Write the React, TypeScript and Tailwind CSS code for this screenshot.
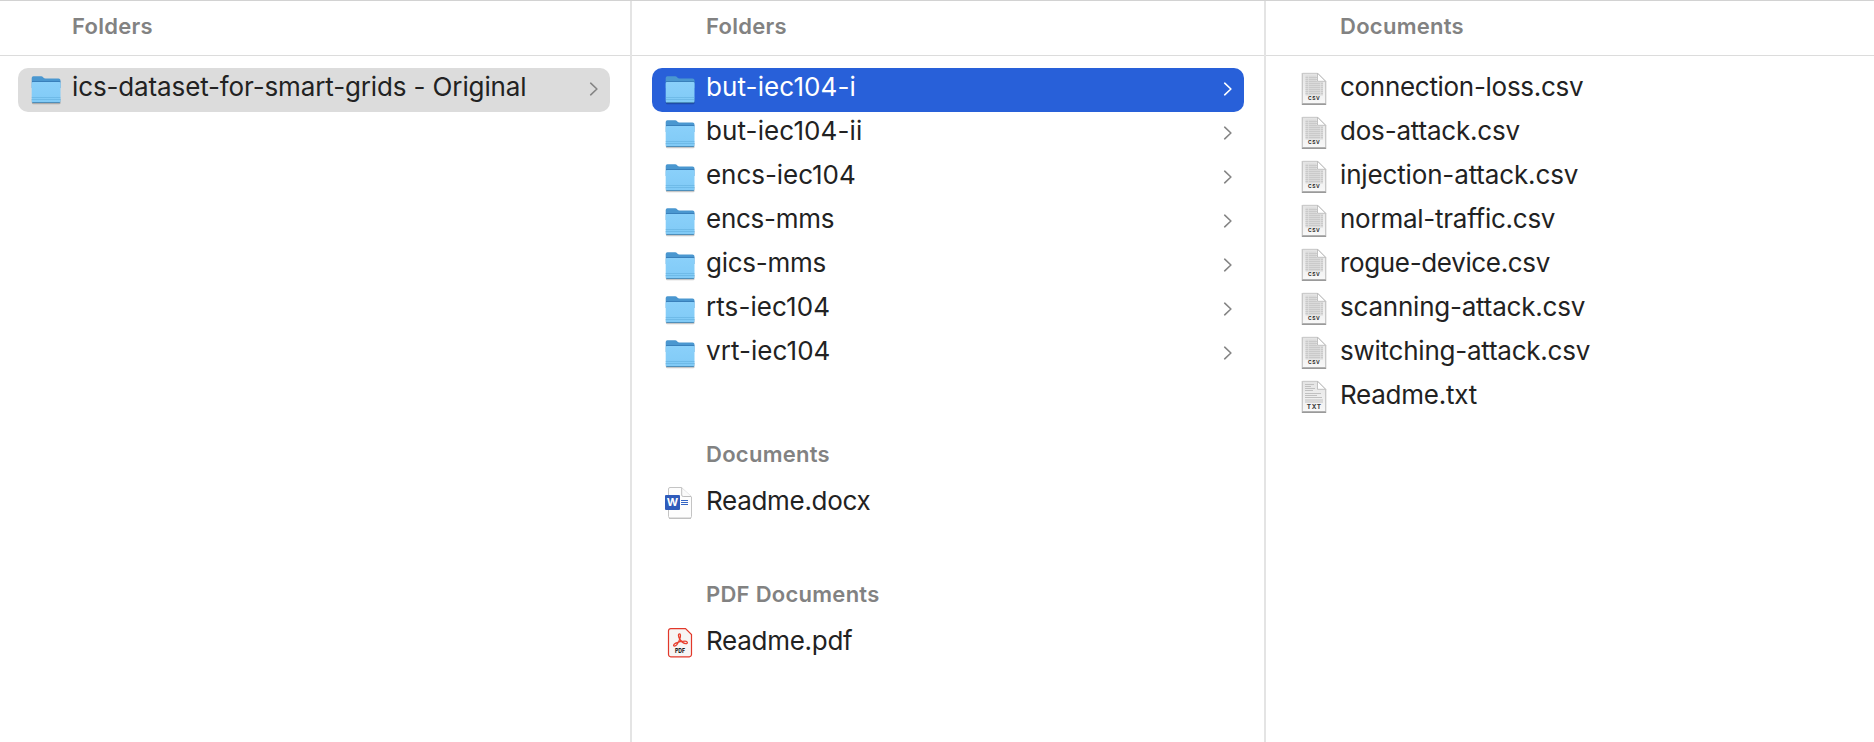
import React from "react";

function FolderIcon() {
  return (
    <svg width="32" height="44" viewBox="0 0 32 44" className="shrink-0">
      <defs>
        <linearGradient id="folder-front" x1="0" y1="0" x2="0" y2="1"><stop offset="0" stopColor="#8ad0fa" /><stop offset="1" stopColor="#80caf6" /></linearGradient>
      </defs>
      <rect x="1.800" y="30" width="28.800" height="6.200" rx="1.500" fill="#000" opacity=".22" />
      <path d="M1.700 9.900A1.700 1.700 0 0 1 3.400 8.200h7.700c1.800 0 2.600 2.300 4.400 2.300h13a2 2 0 0 1 2 2V20H1.700z" fill="#4a97d0" />
      <path d="M2 13.700h28.300" stroke="#3378b4" strokeWidth=".9" />
      <path d="M1.700 15.500a1.400 1.400 0 0 1 1.400-1.400h26a1.400 1.400 0 0 1 1.400 1.400v17.700a1.600 1.600 0 0 1-1.600 1.600H3.300a1.600 1.600 0 0 1-1.600-1.600z" fill="url(#folder-front)" />
      <path d="M1.700 29.500h28.800M1.700 31.500h28.800" stroke="#5ba8d8" strokeWidth=".8" opacity=".6" />
      <path d="M2.300 34.500h27.600" stroke="#4788b4" strokeWidth=".9" />
    </svg>
  );
}

function Page({ children }: { children: React.ReactNode }) {
  return (
    <svg width="32" height="44" viewBox="0 0 32 44" className="shrink-0">
      <defs>
        <linearGradient id="page-fill" x1="0" y1="0" x2="0" y2="1"><stop offset="0" stopColor="#e4e4e4" /><stop offset="1" stopColor="#f8f8f8" /></linearGradient>
      </defs>
      <path d="M3.500 5h16.500l8.500 8.500v23.400h-25z" fill="#cccccc" opacity=".75" />
      <path d="M4.500 5.300h15l8 8v22.200h-23z" fill="url(#page-fill)" stroke="#c0c0c0" strokeWidth=".8" />
      <path d="M4 36.200h24" stroke="#858585" strokeWidth="1.100" />
      {children}
      <path d="M19.500 5.300v8h8z" fill="#fff" stroke="#b5b5b5" strokeWidth=".8" />
    </svg>
  );
}

function CsvIcon() {
  return (
    <Page>
      <path d="M7.500 7.500h11v6.500h6.500v13.500h-17.500z" fill="#dadada" />
      <path d="M7.500 9.500h11.500M7.500 11.500h11.500M7.500 13.500h11.500M7.500 15.500h17.500M7.500 17.500h17.500M7.500 19.500h17.500M7.500 21.500h17.500M7.500 23.500h17.500M7.500 25.500h17.500" stroke="#c8c8c8" strokeWidth=".9" />
      <path d="M10.500 8v19.500M22.500 14.500v13" stroke="#e2e2e2" strokeWidth=".7" />
      <text x="16.200" y="32.300" textAnchor="middle" fontSize="5" fontWeight="700" letterSpacing=".5" fill="#2c2c2c" fontFamily="Inter, sans-serif">CSV</text>
    </Page>
  );
}

function TxtIcon() {
  return (
    <Page>
      <path d="M7 8.500h9M7 10.500h6M7 12.500h10M7 14.500h8M7 17.500h16M7 19.500h12M7 21.500h17M7 24h18M7 26h18" stroke="#c0c0c0" strokeWidth="1" />
      <text x="16.200" y="32.600" textAnchor="middle" fontSize="6.400" fontWeight="700" letterSpacing=".6" fill="#3c3c3c" fontFamily="Inter, sans-serif">TXT</text>
    </Page>
  );
}

function WordIcon() {
  return (
    <svg width="32" height="44" viewBox="0 0 32 44" className="shrink-0">
      <path d="M6 5.500h11.500l10 9.500v19.500a1.500 1.500 0 0 1-1.500 1.500H6a1.500 1.500 0 0 1-1.500-1.500V7A1.500 1.500 0 0 1 6 5.500z" fill="#fdfdfd" stroke="#c4c4c4" strokeWidth="1" />
      <path d="M17.700 5.700v7.300a1.500 1.500 0 0 0 1.500 1.500h8" fill="#fafafa" stroke="#bdbdbd" strokeWidth="1" />
      <path d="M5 36.500h22" stroke="#b8b8b8" strokeWidth=".8" />
      <path d="M17 18.500h7M17 20.500h7M17 22.500h7" stroke="#3565c4" strokeWidth="1" />
      <rect x="1" y="13" width="15" height="15" rx="1" fill="#2f5cbb" />
      <text x="8.500" y="24.400" textAnchor="middle" fontSize="11" fontWeight="700" fill="#fff" fontFamily="Inter, sans-serif">W</text>
    </svg>
  );
}

function PdfIcon() {
  return (
    <svg width="32" height="44" viewBox="0 0 32 44" className="shrink-0">
      <path d="M6.700 6.600h14.800l6 6v20a2.200 2.200 0 0 1-2.200 2.200H6.700a2.200 2.200 0 0 1-2.200-2.200V8.800a2.200 2.200 0 0 1 2.200-2.200z" fill="#f7f5f4" stroke="#e2382a" strokeWidth="1.200" />
      <path d="M15.600 11.800c-1.800 0-1.200 3.200.2 5.400 1.300 2.200 3.900 4.400 6 4.400 2.400 0 2-2.500-.8-2.500-3 0-7 .8-9.300 2-2.600 1.500-2.500 3-1.300 3 1.900 0 4.300-4 5.400-7.200.8-2.500 1-5.100-.2-5.100z" fill="none" stroke="#e8402f" strokeWidth="1.300" />
      <text x="16" y="31.400" textAnchor="middle" textLength="10" lengthAdjust="spacingAndGlyphs" fontSize="6.400" fontWeight="800" fill="#1c1c1c" fontFamily="Inter, sans-serif">PDF</text>
    </svg>
  );
}

function Chevron({ className }: { className: string }) {
  return (
    <svg width="10" height="14" viewBox="0 0 10 14" fill="none" className={className}>
      <path d="M1.700 1.200 7.900 7l-6.200 5.800" stroke="currentColor" strokeWidth="1.600" strokeLinecap="round" strokeLinejoin="round" />
    </svg>
  );
}

type Kind = "folder" | "csv" | "txt" | "word" | "pdf";
const icons: Record<Kind, () => React.JSX.Element> = { folder: FolderIcon, csv: CsvIcon, txt: TxtIcon, word: WordIcon, pdf: PdfIcon };

interface RowProps {
  name: string;
  kind: Kind;
  tracking: string;
  state?: "none" | "active" | "parent";
}

function Row({ name, kind, tracking, state = "none" }: RowProps) {
  const Icon = icons[kind];
  const look = state === "active" ? "bg-[#2860d9] text-white" : state === "parent" ? "bg-[#dcdcdc] text-[#222222]" : "text-[#222222]";
  const arrow = state === "active" ? "text-white" : "text-[#858585]";
  return (
    <div className={`flex h-11 items-center rounded-[10px] pl-3 pr-[11px] ${look}`}>
      <Icon />
      <span className={`ml-2.5 whitespace-nowrap pb-1.5 text-[26px] leading-8 ${tracking}`}>{name}</span>
      {kind === "folder" && <Chevron className={`mb-[2px] ml-auto ${arrow}`} />}
    </div>
  );
}

function Heading({ children }: { children: string }) {
  return <h2 className="whitespace-nowrap pl-[54px] text-[22px] font-semibold leading-7 tracking-[0.27px] text-[#828282]">{children}</h2>;
}

const folders = [
  { name: "but-iec104-i", tracking: "tracking-[0.1px]" },
  { name: "but-iec104-ii", tracking: "tracking-[0.1px]" },
  { name: "encs-iec104", tracking: "tracking-[-0.05px]" },
  { name: "encs-mms", tracking: "tracking-[-0.25px]" },
  { name: "gics-mms", tracking: "tracking-[-0.25px]" },
  { name: "rts-iec104", tracking: "tracking-[0.08px]" },
  { name: "vrt-iec104", tracking: "tracking-[0.05px]" },
];

const files = [
  { name: "connection-loss.csv", tracking: "tracking-[-0.3px]" },
  { name: "dos-attack.csv", tracking: "tracking-[-0.2px]" },
  { name: "injection-attack.csv", tracking: "tracking-[-0.15px]" },
  { name: "normal-traffic.csv", tracking: "tracking-[-0.25px]" },
  { name: "rogue-device.csv", tracking: "tracking-[-0.35px]" },
  { name: "scanning-attack.csv", tracking: "tracking-[-0.22px]" },
  { name: "switching-attack.csv", tracking: "tracking-[-0.24px]" },
];

export default function App() {
  return (
    <main className="flex h-[742px] w-full overflow-hidden border-t border-[#d2d2d2] bg-white font-['Inter',sans-serif]">
      <section className="w-[632px] shrink-0 border-r-2 border-[#e4e4e4]">
        <header className="flex h-[55px] items-start border-b border-[#dcdcdc] pl-[18px] pt-[11px]"><Heading>Folders</Heading></header>
        <div className="pl-[18px] pr-5 pt-3">
          <Row name="ics-dataset-for-smart-grids - Original" kind="folder" state="parent" tracking="tracking-[-0.13px]" />
        </div>
      </section>
      <section className="w-[634px] shrink-0 border-r-2 border-[#e4e4e4]">
        <header className="flex h-[55px] items-start border-b border-[#dcdcdc] pl-5 pt-[11px]"><Heading>Folders</Heading></header>
        <div className="px-5 pt-3">
          {folders.map((f, i) => <Row key={f.name} name={f.name} kind="folder" tracking={f.tracking} state={i === 0 ? "active" : "none"} />)}
          <div className="pb-[14px] pt-[64px]"><Heading>Documents</Heading></div>
          <Row name="Readme.docx" kind="word" tracking="tracking-[-0.3px]" />
          <div className="pb-[14px] pt-[54px]"><Heading>PDF Documents</Heading></div>
          <Row name="Readme.pdf" kind="pdf" tracking="tracking-[-0.27px]" />
        </div>
      </section>
      <section className="min-w-0 flex-1">
        <header className="flex h-[55px] items-start border-b border-[#dcdcdc] pl-5 pt-[11px]"><Heading>Documents</Heading></header>
        <div className="px-5 pt-3">
          {files.map((f) => <Row key={f.name} name={f.name} kind="csv" tracking={f.tracking} />)}
          <Row name="Readme.txt" kind="txt" tracking="tracking-[-0.25px]" />
        </div>
      </section>
    </main>
  );
}
